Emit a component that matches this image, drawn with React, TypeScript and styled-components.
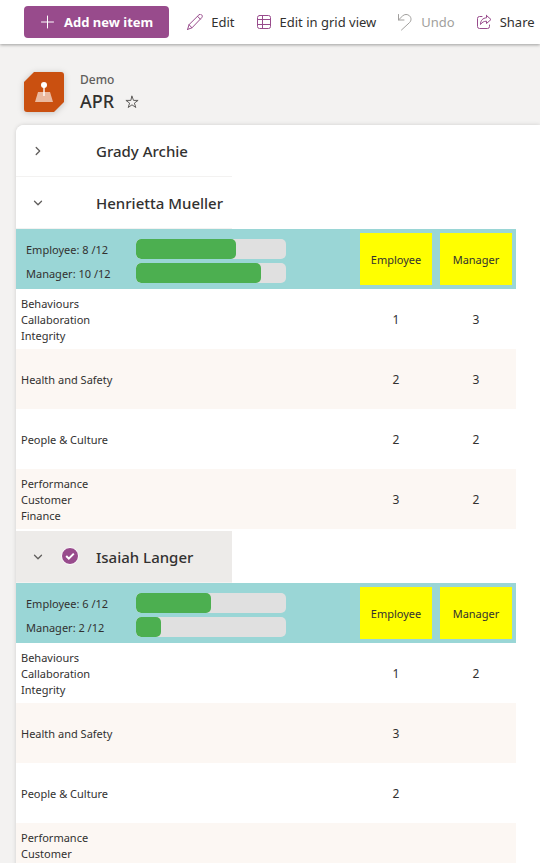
import React, { useState } from 'react';
import styled, { createGlobalStyle } from 'styled-components';

const GlobalStyle = createGlobalStyle`
  *, *::before, *::after { box-sizing: border-box; }
  body {
    margin: 0;
    background: #f3f2f1;
    color: #323130;
    font-family: "Segoe UI", "Noto Sans", "Open Sans", sans-serif;
    font-size: 11px;
  }
  button { font: inherit; color: inherit; }
`;

const Page = styled.div`
  min-height: 100vh;
  display: flex;
  flex-direction: column;
`;

const Toolbar = styled.header`
  flex: none;
  display: flex;
  align-items: center;
  height: 44px;
  padding-left: 24px;
  background: #fff;
  box-shadow: 0 1px 3px rgba(0, 0, 0, 0.35);
`;

const PrimaryButton = styled.button`
  display: flex;
  align-items: center;
  gap: 9px;
  height: 32px;
  margin-right: 10px;
  padding: 0 16px;
  border: 0;
  border-radius: 4px;
  background: #984b8c;
  color: #fff;
  font-size: 13px;
  font-weight: 700;
  white-space: nowrap;
`;

const CommandButton = styled.button`
  display: flex;
  align-items: center;
  gap: 8px;
  height: 40px;
  padding: 0 13px 0 8px;
  border: 0;
  background: transparent;
  font-size: 13px;
  white-space: nowrap;
  &:disabled { color: #a19f9d; }
`;

const Icon = styled.svg<{ $tone?: string }>`
  flex: none;
  display: block;
  fill: none;
  stroke: ${({ $tone }) => $tone ?? '#984b8c'};
  stroke-width: 1;
  stroke-linecap: round;
  stroke-linejoin: round;
`;

const ListHeader = styled.div`
  flex: none;
  display: flex;
  align-items: center;
  gap: 16px;
  padding: 26px 24px 11px;
`;

const ListLogo = styled.svg`
  flex: none;
  filter: drop-shadow(0 1px 3px rgba(0, 0, 0, 0.2));
`;

const Titles = styled.div`
  display: flex;
  flex-direction: column;
`;

const SiteLink = styled.a`
  padding-top: 2px;
  color: #605e5c;
  font-size: 12px;
  font-weight: 500;
  line-height: 16px;
  text-decoration: none;
`;

const TitleRow = styled.div`
  display: flex;
  align-items: center;
  gap: 10px;
`;

const ListTitle = styled.h1`
  margin: 0;
  font-size: 18px;
  font-weight: 500;
  line-height: 26px;
`;

const StarButton = styled.button`
  display: flex;
  padding: 2px 0 0;
  border: 0;
  background: transparent;
`;

const Card = styled.main`
  flex: 1;
  margin-left: 16px;
  border-radius: 8px 0 0 0;
  background: #fff;
  box-shadow: 0 0 4px rgba(0, 0, 0, 0.15);
`;

const Group = styled.section<{ $open: boolean }>`
  padding-bottom: ${({ $open }) => ($open ? '2px' : '0')};
  &:first-child > div { border-top-left-radius: 8px; }
`;

const GroupHeader = styled.div<{ $selected: boolean }>`
  display: flex;
  align-items: center;
  max-width: 216px;
  height: 52px;
  border-bottom: 1px solid #f3f2f1;
  background: ${({ $selected }) => ($selected ? '#edebe9' : '#fff')};
`;

const ExpandButton = styled.button`
  flex: none;
  display: flex;
  align-items: center;
  justify-content: center;
  width: 44px;
  height: 48px;
  padding: 0;
  border: 0;
  background: transparent;
`;

const SelectLabel = styled.label`
  flex: none;
  display: flex;
  width: 36px;
  padding: 0 0 2px 1px;
`;

const HiddenCheckbox = styled.input`
  appearance: none;
  width: 0;
  height: 0;
  margin: 0;
  & + svg { visibility: hidden; }
  &:checked + svg { visibility: visible; }
`;

const GroupName = styled.h2`
  margin: 0;
  font-size: 15px;
  font-weight: 500;
  line-height: 20px;
  white-space: nowrap;
`;

const ScoreTable = styled.table`
  width: 100%;
  max-width: 500px;
  table-layout: fixed;
  border-collapse: collapse;
`;

const ScoreColumn = styled.col`
  width: 80px;
`;

const SummaryRow = styled.tr`
  height: 60px;
  background: #9ad6d6;
`;

const SummaryCell = styled.th`
  padding: 4px 10px 0;
  text-align: left;
  font-weight: 400;
`;

const Meters = styled.div`
  display: flex;
  flex-direction: column;
  gap: 4px;
`;

const MeterRow = styled.div`
  display: grid;
  grid-template-columns: 110px 150px;
  align-items: center;
`;

const Track = styled.div`
  height: 20px;
  overflow: hidden;
  border-radius: 5px;
  background: #e0e0e0;
`;

const Fill = styled.div`
  height: 100%;
  border-radius: 5px;
  background: #4caf50;
`;

const ColumnCell = styled.th`
  padding: 4px;
  font-weight: 400;
`;

const ColumnName = styled.div`
  display: flex;
  align-items: center;
  justify-content: center;
  height: 52px;
  background: #ff0;
`;

const ItemRow = styled.tr`
  height: 60px;
  &:nth-child(even) { background: #fcf7f3; }
`;

const TopicCell = styled.td`
  padding: 2px 5px 0;
  line-height: 16px;
`;

const TopicLine = styled.div``;

const ScoreCell = styled.td`
  padding: 0;
  font-size: 12px;
  text-align: center;
`;

type Item = { topic: string[]; employee?: number; manager?: number };
type Person = {
  name: string;
  open: boolean;
  selected: boolean;
  employee: number;
  manager: number;
  items: Item[];
};

const BEHAVIOURS = ['Behaviours', 'Callaboration', 'Integrity'];
const PERFORMANCE = ['Performance', 'Customer', 'Finance'];
const MAX_SCORE = 12;

const PEOPLE: Person[] = [
  { name: 'Grady Archie', open: false, selected: false, employee: 0, manager: 0, items: [] },
  {
    name: 'Henrietta Mueller', open: true, selected: false, employee: 8, manager: 10,
    items: [
      { topic: BEHAVIOURS, employee: 1, manager: 3 },
      { topic: ['Health and Safety'], employee: 2, manager: 3 },
      { topic: ['People & Culture'], employee: 2, manager: 2 },
      { topic: PERFORMANCE, employee: 3, manager: 2 },
    ],
  },
  {
    name: 'Isaiah Langer', open: true, selected: true, employee: 6, manager: 2,
    items: [
      { topic: BEHAVIOURS, employee: 1, manager: 2 },
      { topic: ['Health and Safety'], employee: 3 },
      { topic: ['People & Culture'], employee: 2 },
      { topic: PERFORMANCE },
    ],
  },
];

function Meter({ label, value }: { label: string; value: number }) {
  return (
    <MeterRow>
      <span>{`${label}: ${value} /${MAX_SCORE}`}</span>
      <Track role="progressbar" aria-label={label} aria-valuenow={value} aria-valuemax={MAX_SCORE}>
        <Fill style={{ width: `${(value / MAX_SCORE) * 100}%` }} />
      </Track>
    </MeterRow>
  );
}

function Scores({ person }: { person: Person }) {
  return (
    <ScoreTable>
      <colgroup>
        <col />
        <ScoreColumn />
        <ScoreColumn />
      </colgroup>
      <thead>
        <SummaryRow>
          <SummaryCell>
            <Meters>
              <Meter label="Employee" value={person.employee} />
              <Meter label="Manager" value={person.manager} />
            </Meters>
          </SummaryCell>
          <ColumnCell><ColumnName>Employee</ColumnName></ColumnCell>
          <ColumnCell><ColumnName>Manager</ColumnName></ColumnCell>
        </SummaryRow>
      </thead>
      <tbody>
        {person.items.map((item) => (
          <ItemRow key={item.topic[0]}>
            <TopicCell>
              {item.topic.map((line) => <TopicLine key={line}>{line}</TopicLine>)}
            </TopicCell>
            <ScoreCell>{item.employee}</ScoreCell>
            <ScoreCell>{item.manager}</ScoreCell>
          </ItemRow>
        ))}
      </tbody>
    </ScoreTable>
  );
}

function PersonGroup({ person }: { person: Person }) {
  const [open, setOpen] = useState(person.open);
  const [selected, setSelected] = useState(person.selected);
  return (
    <Group $open={open}>
      <GroupHeader $selected={selected}>
        <ExpandButton aria-label={`Toggle ${person.name}`} aria-expanded={open} onClick={() => setOpen(!open)}>
          <Icon $tone="#605e5c" width="12" height="12" viewBox="0 0 12 12">
            <path strokeWidth="1.3" d={open ? 'M2.5 4.2 6 7.7l3.5-3.5' : 'M4.2 2.5 7.7 6 4.2 9.5'} />
          </Icon>
        </ExpandButton>
        <SelectLabel>
          <HiddenCheckbox
            type="checkbox"
            aria-label={`Select ${person.name}`}
            checked={selected}
            onChange={() => setSelected(!selected)}
          />
          <svg width="18" height="18" viewBox="0 0 18 18">
            <circle cx="9" cy="9" r="8.5" fill="#984b8c" stroke="#fff" />
            <path d="m5.2 9 2.6 2.6 5-5" fill="none" stroke="#fff" strokeWidth="2" />
          </svg>
        </SelectLabel>
        <GroupName>{person.name}</GroupName>
      </GroupHeader>
      {open && <Scores person={person} />}
    </Group>
  );
}

export default function App() {
  return (
    <Page>
      <GlobalStyle />
      <Toolbar>
        <PrimaryButton>
          <Icon $tone="#fff" width="15" height="16" viewBox="0 0 15 16">
            <path d="M7.5 2v12M1.5 8h12" />
          </Icon>
          Add new item
        </PrimaryButton>
        <CommandButton>
          <Icon width="16" height="16" viewBox="0 0 16 16">
            <path d="M.6 15.4 2 10.7 11.9.9a1.9 1.9 0 0 1 2.8 0c.8.8.8 2 0 2.8L5 13.8.6 15.4ZM2 10.7l3 3.1M10.5 2.3l2.8 2.8" />
          </Icon>
          Edit
        </CommandButton>
        <CommandButton>
          <Icon width="16" height="16" viewBox="0 0 16 16">
            <rect x="1.5" y="1.5" width="13" height="13" rx="2" />
            <path d="M6.5 1.5v13M1.5 5.5h13M1.5 10.5h13" />
          </Icon>
          Edit in grid view
        </CommandButton>
        <CommandButton disabled>
          <Icon $tone="#a19f9d" width="16" height="18" viewBox="0 0 16 18">
            <path d="M1.5 1.5V7H7M1.5 7l4-4c2-2 5-2 7-.2 2 2 2 4.800 0 6.800L4.500 17" />
          </Icon>
          Undo
        </CommandButton>
        <CommandButton>
          <Icon width="16" height="16" viewBox="0 0 16 16">
            <path d="M6 2.500H3.500a2 2 0 0 0-2 2v8a2 2 0 0 0 2 2h8a2 2 0 0 0 2-2V11" />
            <path d="M10.500 1.500 15 5.500l-4.500 4V7.200C8 7.200 6 8.200 4.500 10.500c0-4 2.300-6.500 6-6.700V1.500Z" />
          </Icon>
          Share
        </CommandButton>
      </Toolbar>

      <ListHeader>
        <ListLogo width="40" height="40" viewBox="0 0 40 40" aria-hidden="true">
          <path d="M10 0h27a3 3 0 0 1 3 3v27L30 40H3a3 3 0 0 1-3-3V10Z" fill="#ca5010" />
          <path d="M14 20h12l3 10H11Z" fill="#fff" fillOpacity=".6" />
          <path d="M19 14h2v10h-2Z" fill="#fff" fillOpacity=".7" />
          <circle cx="20" cy="13" r="3" fill="#fff" />
        </ListLogo>
        <Titles>
          <SiteLink href="#">Demo</SiteLink>
          <TitleRow>
            <ListTitle>APR</ListTitle>
            <StarButton aria-label="Add to favorites">
              <Icon $tone="#605e5c" width="16" height="16" viewBox="0 0 16 16">
                <path d="m8 2.200 1.500 4.200h4.600l-3.700 2.700 1.400 4.400L8 10.800l-3.800 2.700 1.400-4.400-3.700-2.700h4.600Z" />
              </Icon>
            </StarButton>
          </TitleRow>
        </Titles>
      </ListHeader>

      <Card>
        {PEOPLE.map((person) => <PersonGroup key={person.name} person={person} />)}
      </Card>
    </Page>
  );
}
